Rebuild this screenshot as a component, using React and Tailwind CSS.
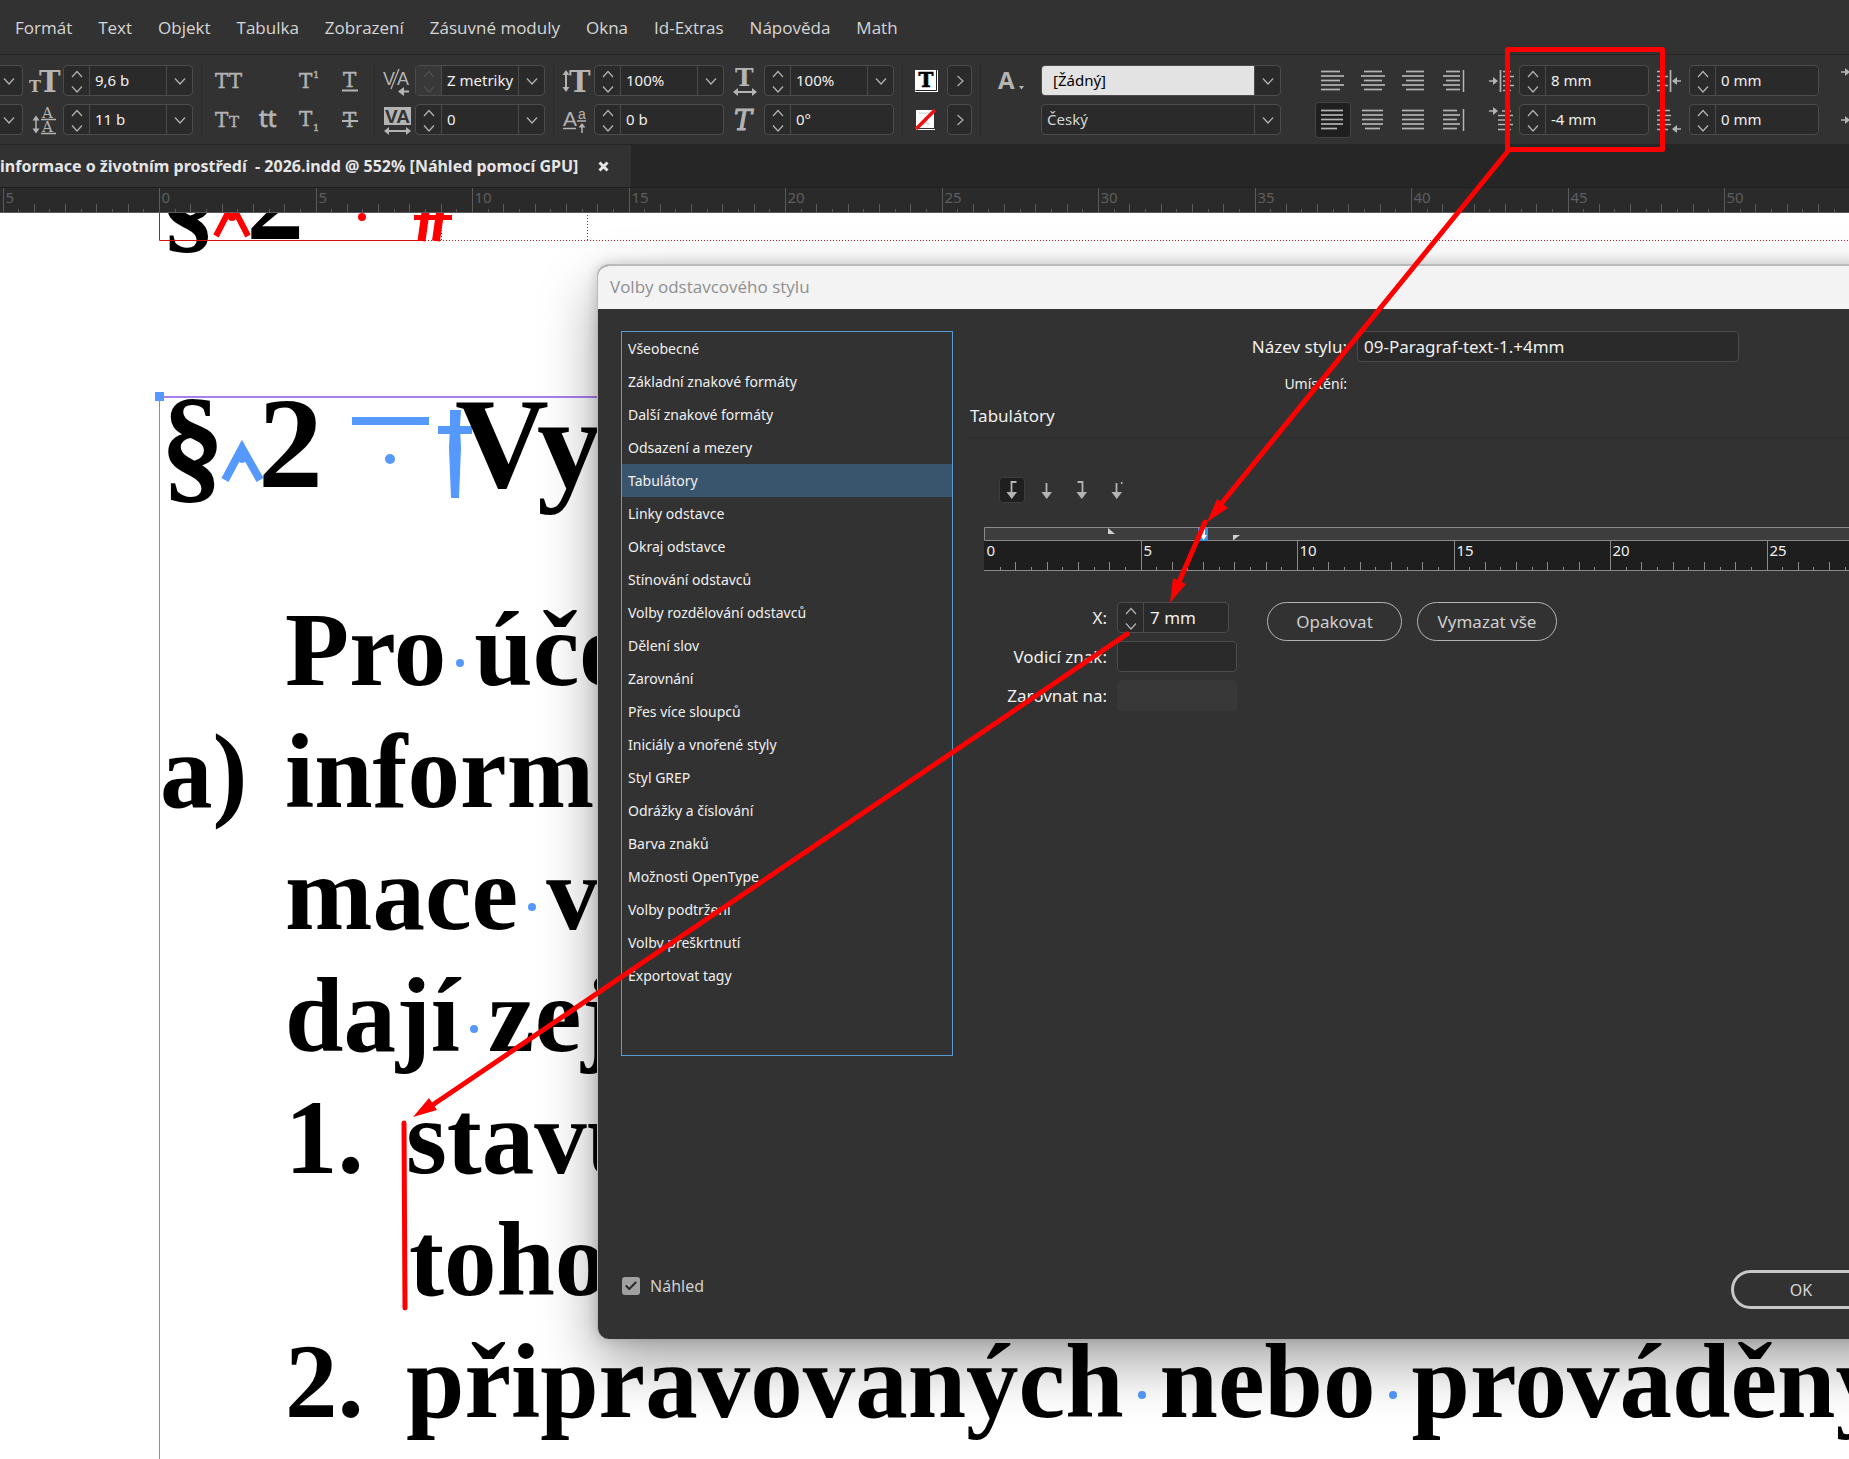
import React, { useState } from 'react';
import { Check } from 'lucide-react';

const MENU = ['Formát', 'Text', 'Objekt', 'Tabulka', 'Zobrazení', 'Zásuvné moduly', 'Okna', 'Id-Extras', 'Nápověda', 'Math'];

const SECTIONS = [
  'Všeobecné',
  'Základní znakové formáty',
  'Další znakové formáty',
  'Odsazení a mezery',
  'Tabulátory',
  'Linky odstavce',
  'Okraj odstavce',
  'Stínování odstavců',
  'Volby rozdělování odstavců',
  'Dělení slov',
  'Zarovnání',
  'Přes více sloupců',
  'Iniciály a vnořené styly',
  'Styl GREP',
  'Odrážky a číslování',
  'Barva znaků',
  'Možnosti OpenType',
  'Volby podtržení',
  'Volby přeškrtnutí',
  'Exportovat tagy'
];

const UNIT = 31.3;

/* ---------- toolbar glyphs ---------- */

const Glyph = ({ children, w = 30 }) => (
  <svg
    width={w}
    height="30"
    viewBox={`0 0 ${w} 30`}
    fill="#b4b4b4"
    stroke="none"
    fontFamily="'DejaVu Serif', serif"
    className="overflow-visible"
    aria-hidden="true"
  >
    {children}
  </svg>
);

const FontSizeIcon = () => (
  <Glyph>
    <text x="1" y="26" fontSize="16" fontWeight="bold">T</text>
    <text x="11" y="26" fontSize="29" fontWeight="bold">T</text>
  </Glyph>
);

const LeadingIcon = () => (
  <Glyph>
    <text x="14" y="13" fontSize="15">A</text>
    <path d="M13 14.500h15M13 28.500h15M8 14v11" stroke="#b4b4b4" strokeWidth="1.500" />
    <path d="M4.500 15.500 8 10.500l3.500 5zM4.500 23.500 8 28.500l3.500-5z" />
    <text x="14" y="27" fontSize="15">A</text>
  </Glyph>
);

const KerningIcon = () => (
  <Glyph>
    <text x="3" y="19" fontSize="18" fontFamily="'Liberation Sans', sans-serif">V</text>
    <text x="17" y="19" fontSize="18" fontFamily="'Liberation Sans', sans-serif">A</text>
    <path d="M11 23 19 3" stroke="#b4b4b4" strokeWidth="1.300" />
    <path d="M22 25.500h7" stroke="#b4b4b4" strokeWidth="2" />
    <path d="M18 25.500l6-4.500v9z" />
  </Glyph>
);

const TrackingIcon = () => (
  <Glyph>
    <path d="M4 2h27v18H4z" />
    <text x="5" y="18" fontSize="19" fontWeight="bold" fill="#323232" fontFamily="'Liberation Sans', sans-serif">VA</text>
    <path d="M7 26h21" stroke="#b4b4b4" strokeWidth="2" />
    <path d="M4 26l5-4v8zM31 26l-5-4v8z" />
  </Glyph>
);

const VScaleIcon = () => (
  <Glyph>
    <path d="M7 8v14" stroke="#b4b4b4" strokeWidth="2" />
    <path d="M3.500 9 7 4l3.500 5zM3.500 21 7 26l3.500-5z" />
    <text x="10" y="26" fontSize="29" fontWeight="bold">T</text>
  </Glyph>
);

const BaselineIcon = () => (
  <Glyph>
    <text x="4" y="21" fontSize="21" fontFamily="'Liberation Sans', sans-serif">A</text>
    <path d="M4 23.500h13" stroke="#b4b4b4" strokeWidth="1.500" />
    <text x="19" y="14" fontSize="14" fontFamily="'Liberation Sans', sans-serif">a</text>
    <path d="M18 16h9M23 20v8" stroke="#b4b4b4" strokeWidth="1.500" />
    <path d="M19.500 22.500 23 18l3.500 4.500z" />
  </Glyph>
);

const HScaleIcon = () => (
  <Glyph>
    <text x="6" y="20" fontSize="25" fontWeight="bold">T</text>
    <path d="M7 26h18" stroke="#b4b4b4" strokeWidth="2" />
    <path d="M4 26l5-4v8zM28 26l-5-4v8z" />
  </Glyph>
);

const SkewIcon = () => (
  <Glyph>
    <text x="5" y="25" fontSize="27" fontStyle="italic" stroke="#b4b4b4" strokeWidth="1">T</text>
  </Glyph>
);

const CapsIcon = () => (
  <Glyph>
    <text x="0" y="22" fontSize="20" stroke="#b4b4b4" strokeWidth=".4">TT</text>
  </Glyph>
);

const SmallCapsIcon = () => (
  <Glyph>
    <text x="0" y="22" fontSize="20" stroke="#b4b4b4" strokeWidth=".4">T</text>
    <text x="14" y="22" fontSize="15" stroke="#b4b4b4" strokeWidth=".4">T</text>
  </Glyph>
);

const LigatureIcon = () => (
  <Glyph>
    <text x="4" y="22" fontSize="24" fontFamily="'Noto Sans', sans-serif" stroke="#b4b4b4" strokeWidth=".8">tt</text>
  </Glyph>
);

const SuperIcon = () => (
  <Glyph>
    <text x="4" y="22" fontSize="20" stroke="#b4b4b4" strokeWidth=".4">T</text>
    <text x="18" y="12" fontSize="10" stroke="#b4b4b4" strokeWidth=".4">1</text>
  </Glyph>
);

const SubIcon = () => (
  <Glyph>
    <text x="4" y="21" fontSize="20" stroke="#b4b4b4" strokeWidth=".4">T</text>
    <text x="18" y="26" fontSize="10" stroke="#b4b4b4" strokeWidth=".4">1</text>
  </Glyph>
);

const UnderlineIcon = () => (
  <Glyph>
    <text x="8" y="21" fontSize="20" stroke="#b4b4b4" strokeWidth=".4">T</text>
    <path d="M7 24.500h16" stroke="#b4b4b4" strokeWidth="2" />
  </Glyph>
);

const StrikeIcon = () => (
  <Glyph>
    <text x="8" y="22" fontSize="20" stroke="#b4b4b4" strokeWidth=".4">T</text>
    <path d="M7 16h16" stroke="#b4b4b4" strokeWidth="2" />
  </Glyph>
);

const FillIcon = () => (
  <svg width="24" height="24" viewBox="0 0 24 24" fontFamily="'DejaVu Serif', serif" aria-hidden="true">
    <path d="M0 1h23v22H0z" fill="#fff" />
    <path d="M.5 21.500h21V1" fill="none" stroke="#222" />
    <text x="11" y="18" fontSize="20" fontWeight="bold" textAnchor="middle" stroke="#000" strokeWidth=".6">T</text>
  </svg>
);

const StrokeIcon = () => (
  <svg width="24" height="24" viewBox="0 0 24 24" aria-hidden="true">
    <path d="M1 2h18v18H1z" fill="#fff" />
    <path d="M4 5h12v3h-4v8h3M8 16h2V9" fill="none" stroke="#ccc" />
    <path d="M1 21.500h19" stroke="#fff" />
    <path d="M1 21 20 2" stroke="#ee1111" strokeWidth="3.500" />
  </svg>
);

// each pair is the start and the end of one text row
const ALIGNMENTS = [
  { label: 'Zarovnat vlevo', rows: [[3, 22], [3, 26], [3, 22], [3, 26], [3, 22]] },
  { label: 'Zarovnat na střed', rows: [[6, 24], [3, 27], [6, 24], [3, 27], [6, 24]] },
  { label: 'Zarovnat vpravo', rows: [[8, 26], [4, 26], [8, 26], [4, 26], [8, 26]] },
  { label: 'Zarovnat ke hřbetu', rows: [[8, 22], [5, 22], [8, 22], [5, 22], [8, 22]], bar: true },
  { label: 'Do bloku vlevo', rows: [[3, 25], [3, 25], [3, 25], [3, 25], [3, 19]] },
  { label: 'Do bloku na střed', rows: [[4, 25], [4, 25], [4, 25], [4, 25], [7, 22]] },
  { label: 'Do bloku', rows: [[4, 26], [4, 26], [4, 26], [4, 26], [4, 26]] },
  { label: 'Od hřbetu', rows: [[5, 19], [5, 22], [5, 19], [5, 22], [5, 19]], bar: true }
];

const Rows = ({ rows, bar }) => (
  <Glyph>
    {rows.map(([a, b], i) => (
      <path key={i} d={`M${a} ${5.5 + i * 4.5}H${b}`} stroke="#b4b4b4" strokeWidth="1.700" />
    ))}
    {bar && <path d="M25.500 4v22" stroke="#b4b4b4" strokeWidth="1.500" />}
  </Glyph>
);

const IndentIcon = ({ kind }) => (
  <Glyph>
    <g stroke="#b4b4b4" strokeWidth="1.700">
      {kind === 'left' && <path d="M5 15h6M16.500 4v22M19 5.500h8M19 10.500h11M19 15h8M19 19.500h11M19 24.500h8" />}
      {kind === 'first' && <path d="M5 6h6M18 6h9M14 10.500h15M14 15h13M14 19.500h15M14 24.500h13" />}
      {kind === 'right' && <path d="M3 5.500h8M3 10.500h11M3 15h8M3 19.500h11M3 24.500h8M16.500 4v22M21 15h6" />}
      {kind === 'last' && <path d="M3 5.500h13M3 10.500h14M3 15h13M3 19.500h14M3 24.500h11M21 24h6" />}
    </g>
    {kind === 'left' && <path d="m14 15-5-4v8z" />}
    {kind === 'first' && <path d="m14 6-5-4v8z" />}
    {kind === 'right' && <path d="m18 15 5-4v8z" />}
    {kind === 'last' && <path d="m18 24 5-4v8z" />}
  </Glyph>
);

const CHEVRONS = {
  up: 'M3 11 8 5.500 13 11',
  down: 'M3 5.500 8 11 13 5.500',
  right: 'M5.500 3 11 8 5.500 13'
};

const Chevron = ({ dir = 'down' }) => (
  <svg width="16" height="16" viewBox="0 0 16 16" fill="none" stroke="currentColor" strokeWidth="1.200" aria-hidden="true">
    <path d={CHEVRONS[dir]} />
  </svg>
);

/* ---------- form pieces ---------- */

const Spinner = ({ label, disabled }) => (
  <div className={`flex w-[26px] shrink-0 flex-col items-center justify-center border-r border-[#4b4b4b] ${disabled ? 'bg-[#383838] text-[#505050]' : 'text-[#b4b4b4]'}`}>
    <button type="button" disabled={disabled} aria-label={`${label}: zvýšit`} className="h-[15px]">
      <Chevron dir="up" />
    </button>
    <button type="button" disabled={disabled} aria-label={`${label}: snížit`} className="h-[15px]">
      <Chevron />
    </button>
  </div>
);

const Field = ({ label, value, menu, disabled }) => (
  <div className="flex h-[31px] w-[130px] shrink-0 overflow-hidden rounded border border-[#4b4b4b] bg-[#2a2a2a]">
    <Spinner label={label} disabled={disabled} />
    <input aria-label={label} defaultValue={value} className="min-w-0 flex-1 bg-transparent pl-[5px] text-[15px] text-[#f0f0f0] outline-none" />
    {menu && (
      <button type="button" aria-label={`${label}: nabídka`} className="flex w-[26px] shrink-0 items-center justify-center border-l border-[#4b4b4b] text-[#b4b4b4]">
        <Chevron />
      </button>
    )}
  </div>
);

const Picker = ({ label, value, light }) => (
  <div className="relative flex h-[31px] overflow-hidden rounded border border-[#4b4b4b] bg-[#2a2a2a]">
    <select
      aria-label={label}
      className={`flex-1 appearance-none text-[15px] outline-none ${light ? 'bg-[#e3e3e3] pl-[11px] text-black' : 'pl-[5px] text-[#d6d6d6]'}`}
    >
      <option>{value}</option>
    </select>
    <span className="flex w-[26px] items-center justify-center border-l border-[#4b4b4b] text-[#b4b4b4]">
      <Chevron />
    </span>
  </div>
);

const Pair = ({ className = '', children }) => (
  <div className={`flex shrink-0 flex-col gap-2 ${className}`}>{children}</div>
);

const IconCell = ({ children }) => (
  <span className="flex h-[31px] w-10 items-center justify-center">{children}</span>
);

const Divider = ({ className = '' }) => (
  <span className={`h-[72px] w-px shrink-0 bg-[#2b2b2b] ${className}`} />
);

const Toolbar = () => (
  <div className="flex h-[90px] items-center overflow-hidden border-b border-[#252525] pt-px">
    <Pair>
      {['Písmo', 'Řez písma'].map((label) => (
        <button
          key={label}
          type="button"
          aria-label={label}
          className="flex h-[31px] w-[23px] items-center justify-center rounded-r border border-l-0 border-[#4b4b4b] bg-[#2a2a2a] pr-1 text-[#b4b4b4]"
        >
          <Chevron />
        </button>
      ))}
    </Pair>
    <Pair>
      <IconCell><FontSizeIcon /></IconCell>
      <IconCell><LeadingIcon /></IconCell>
    </Pair>
    <Pair>
      <Field label="Velikost písma" value="9,6 b" menu />
      <Field label="Proklad" value="11 b" menu />
    </Pair>
    <Divider className="mx-2" />
    <div className="grid shrink-0 grid-cols-4 gap-y-2 pr-1">
      {[CapsIcon, null, SuperIcon, UnderlineIcon, SmallCapsIcon, LigatureIcon, SubIcon, StrikeIcon].map((Icon, i) => (
        <IconCell key={i}>{Icon && <Icon />}</IconCell>
      ))}
    </div>
    <Divider />
    <Pair>
      <IconCell><KerningIcon /></IconCell>
      <IconCell><TrackingIcon /></IconCell>
    </Pair>
    <Pair>
      <Field label="Vyrovnání párů" value="Z metriky" menu disabled />
      <Field label="Prostrkání" value="0" menu />
    </Pair>
    <Divider className="ml-2" />
    <Pair>
      <IconCell><VScaleIcon /></IconCell>
      <IconCell><BaselineIcon /></IconCell>
    </Pair>
    <Pair>
      <Field label="Svislé měřítko" value="100%" menu />
      <Field label="Posun účaří" value="0 b" />
    </Pair>
    <Pair>
      <IconCell><HScaleIcon /></IconCell>
      <IconCell><SkewIcon /></IconCell>
    </Pair>
    <Pair>
      <Field label="Vodorovné měřítko" value="100%" menu />
      <Field label="Sklon" value="0°" />
    </Pair>
    <Divider className="mr-3 ml-2" />
    <Pair>
      {[['Výplň', FillIcon], ['Tah', StrokeIcon]].map(([label, Icon]) => (
        <div key={label} className="flex h-[31px] items-center">
          <Icon />
          <button
            type="button"
            aria-label={label}
            className="ml-2 flex h-[31px] w-[25px] items-center justify-center rounded border border-[#4b4b4b] bg-[#2a2a2a] text-[#b4b4b4]"
          >
            <Chevron dir="right" />
          </button>
        </div>
      ))}
    </Pair>
    <Divider className="ml-2" />
    <Pair className="w-15 items-center self-start pt-[10px]">
      <Glyph>
        <text x="2" y="23" fontSize="24" fontWeight="bold" fontFamily="'Open Sans', sans-serif">A</text>
        <path d="M23 20h5l-2.500 3.500z" />
      </Glyph>
    </Pair>
    <Pair className="w-60">
      <Picker label="Znakový styl" value="[Žádný]" light />
      <Picker label="Jazyk" value="Český" />
    </Pair>
    <div className="ml-8 grid shrink-0 grid-cols-4 gap-y-2">
      {ALIGNMENTS.map(({ label, rows, bar }, i) => (
        <span key={label} className="flex h-[31px] w-10 items-center justify-center">
          <button
            type="button"
            aria-label={label}
            className={`flex shrink-0 items-center justify-center rounded border px-0.5 py-0.5 ${i === 4 ? 'border-[#444] bg-[#1f1f1f]' : 'border-transparent'}`}
          >
            <Rows rows={rows} bar={bar} />
          </button>
        </span>
      ))}
    </div>
    <Pair className="ml-1.5">
      <IconCell><IndentIcon kind="left" /></IconCell>
      <IconCell><IndentIcon kind="first" /></IconCell>
    </Pair>
    <Pair>
      <Field label="Levé odsazení" value="8 mm" />
      <Field label="Odsazení prvního řádku" value="-4 mm" />
    </Pair>
    <Pair>
      <IconCell><IndentIcon kind="right" /></IconCell>
      <IconCell><IndentIcon kind="last" /></IconCell>
    </Pair>
    <Pair>
      <Field label="Pravé odsazení" value="0 mm" />
      <Field label="Odsazení posledního řádku" value="0 mm" />
    </Pair>
    <Pair className="ml-3">
      <IconCell><IndentIcon kind="first" /></IconCell>
      <IconCell><IndentIcon kind="left" /></IconCell>
    </Pair>
  </div>
);

/* ---------- rulers ---------- */

const Ruler = ({ from, to, origin, height, labelY, tick, text, size }) => {
  const marks = [];
  for (let half = from * 2; half <= to * 2; half++) {
    marks.push(half);
  }
  return (
    <svg width="100%" height={height} className="block" fontSize={size} aria-hidden="true">
      {marks.map((half) => {
        const x = Math.round(origin + (half * UNIT) / 2) + 0.5;
        const major = half % 10 === 0;
        const len = major ? height : half % 2 === 0 ? 8 : 3;
        return (
          <g key={half}>
            {!(major && x < 1) && <path d={`M${x} ${height - len}V${height}`} stroke={tick} />}
            {major && <text x={x + 2} y={labelY} fill={text}>{Math.abs(half / 2)}</text>}
          </g>
        );
      })}
    </svg>
  );
};

/* ---------- document ---------- */

// a word space with its blue hidden-character dot above the baseline
const Space = ({ width = 28 }) => (
  <svg width={width} height="26" className="inline-block align-baseline" aria-hidden="true">
    <circle cx={width / 2} cy="4" r="4" fill="#5599ff" />
  </svg>
);

const Line = ({ marker, className = 'pl-[285px]', markerClass = '', children }) => (
  <p className={`flex items-baseline whitespace-nowrap ${className}`}>
    {marker && <span className={`shrink-0 ${markerClass}`}>{marker}</span>}
    <span>{children}</span>
  </p>
);

const Page = () => (
  <main className="relative min-h-0 flex-1 overflow-hidden bg-white font-['Liberation_Serif',serif] font-bold text-black">
    <p className="-mt-[72px] flex h-[120px] pl-[160px] text-[115px] leading-[120px]">
      <span>§</span>
      <span className="w-[29px]" />
      <span>2</span>
    </p>
    {/* frame edges and hidden characters */}
    <svg className="pointer-events-none absolute inset-0 h-full w-full" aria-hidden="true">
      <path d="M159.500 0V27.500H425" fill="none" stroke="#d01010" />
      <path d="M425 27.500H3000M441.500 2V27M587.500 2V27" fill="none" stroke="#b02020" strokeDasharray="1 2" />
      <path d="M216 23 232-8 248 23" fill="none" stroke="#ff0000" strokeWidth="6" />
      <circle cx="232" cy="4" r="4" fill="#ff0000" />
      <circle cx="362" cy="4" r="4" fill="#ff0000" />
      <path d="M414 4.500h38" stroke="#ff0000" strokeWidth="5" />
      <path d="M421.500 28 426-4M436 28 440.500-4" stroke="#ff0000" strokeWidth="8" />
      <path d="M159.500 184V3000" stroke="#5b9bd5" />
      <path d="M160 184H3000" stroke="#a97ff0" strokeWidth="2" />
      <path d="M155 179h9v9h-9z" fill="#5599ff" />
    </svg>
    <p className="mt-[112px] flex h-[140px] pl-[160px] text-[130px] leading-[140px]">
      <span>§</span>
      <svg width="33" height="140" className="overflow-visible" aria-hidden="true">
        <path d="M0 107 17 75 35 107" fill="none" stroke="#5599ff" strokeWidth="8" />
        <circle cx="17" cy="85" r="5" fill="#5599ff" />
      </svg>
      <span>2</span>
      <svg width="132" height="140" className="overflow-visible" fill="#5599ff" aria-hidden="true">
        <path d="M29 44h77v8H29z" />
        <circle cx="67" cy="86" r="5" />
        <path d="M115 53h34v8h-34zM127 37h11l-1 16 1 22-2 50h-8l-2-50 1-22z" />
      </svg>
      <span>Vy</span>
    </p>
    <div className="mt-[76px] text-[105px] leading-[122px]">
      <Line>Pro<Space />úče</Line>
      <Line marker="a)" className="pl-[160px]" markerClass="w-[125px]">inform</Line>
      <Line>mace<Space />v</Line>
      <Line>dají<Space />zej</Line>
      <Line marker="1." markerClass="w-[121px]">stavu</Line>
      <Line className="pl-[409px]">toho</Line>
      <Line marker="2." markerClass="w-[121px]">připravovaných<Space width={36} />nebo<Space width={36} />prováděných</Line>
    </div>
  </main>
);

/* ---------- dialog ---------- */

const TAB_KINDS = [
  { label: 'Levý tabulátor', d: 'M12.500 20V5h5' },
  { label: 'Středový tabulátor', d: 'M12.500 20V6' },
  { label: 'Pravý tabulátor', d: 'M13.500 20V5h-5' },
  { label: 'Desetinný tabulátor', d: 'M12.500 20V6M17 6h1.500' }
];

const StyleDialog = () => {
  const [section, setSection] = useState('Tabulátory');
  const [tabKind, setTabKind] = useState(0);

  return (
    <section
      role="dialog"
      aria-labelledby="dialog-title"
      className="absolute top-[264px] -right-16 left-[597px] flex h-[1075px] flex-col overflow-hidden rounded-xl border-t-2 border-l border-[#b9b9b9] bg-[#323232] text-[#f0f0f0] shadow-[0_24px_56px_rgba(0,0,0,0.36),0_0_14px_rgba(0,0,0,0.18)]"
    >
      <h2 id="dialog-title" className="h-[43px] shrink-0 bg-[#f3f3f3] pl-3 font-['Open_Sans',sans-serif] text-[17px] leading-[42px] text-[#8f8f8f]">
        Volby odstavcového stylu
      </h2>

      <div className="flex flex-1 pt-[22px] pl-[23px]">
        <ul className="h-[725px] w-[332px] shrink-0 border border-[#5b9bd5]">
          {SECTIONS.map((name) => (
            <li key={name}>
              <button
                type="button"
                onClick={() => setSection(name)}
                className={`block h-[33px] w-full pl-1.5 text-left text-[14px] ${name === section ? 'bg-[#39556e]' : ''}`}
              >
                {name}
              </button>
            </li>
          ))}
        </ul>

        <div className="ml-4 min-w-0 flex-1">
          <div className="grid grid-cols-[378px_382px] items-center gap-x-[10px]">
            <label htmlFor="style-name" className="text-right text-[17px] leading-6">Název stylu:</label>
            <input
              id="style-name"
              defaultValue="09-Paragraf-text-1.+4mm"
              className="h-[31px] rounded border border-[#4b4b4b] bg-[#2a2a2a] pl-1.5 text-[17px] outline-none"
            />
            <span className="mt-2.5 text-right text-[14px] leading-6">Umístění:</span>
          </div>

          <h3 className="mt-2 h-[34px] border-b border-[#2c2c2c] pl-px text-[17px] leading-6">{section}</h3>

          <div className="mt-[39px] flex gap-[9px] pl-[30px]">
            {TAB_KINDS.map(({ label, d }, i) => (
              <button
                key={label}
                type="button"
                aria-label={label}
                onClick={() => setTabKind(i)}
                className={`flex size-[26px] items-center justify-center rounded border ${i === tabKind ? 'border-[#3d3d3d] bg-[#1f1f1f]' : 'border-transparent'}`}
              >
                <svg width="26" height="26" viewBox="0 0 26 26" className="shrink-0" aria-hidden="true">
                  <path d={d} fill="none" stroke="#b4b4b4" strokeWidth="1.800" />
                  <path d="M7.500 15h10.500l-5.250 7z" fill="#b4b4b4" />
                </svg>
              </button>
            ))}
          </div>

          <div className="mt-6 ml-[15px]">
            <svg width="100%" height="14" className="block" aria-hidden="true">
              <path d="M.5 .5H3000V13.500H.5z" fill="#3d3d3d" stroke="#8a8a8a" />
              <path d="M124 7V1l7 6zM249 8h7l-7 5.500z" fill="#d0d0d0" />
              <path d="M214 1h10v13h-10z" fill="#3d8ee6" />
              <path d="M218 2h3v6h2l-3.500 5L216 8h2z" fill="#fff" />
            </svg>
            <div className="border-b border-[#8a8a8a] bg-[#1e1e1e]">
              <Ruler from={0} to={30} origin={0} height={29} labelY={15} tick="#8a8a8a" text="#f0f0f0" size={15} />
            </div>
          </div>

          <div className="mt-[31px] flex items-start pl-[38px]">
            <div className="grid grid-cols-[100px_120px] items-center gap-x-[10px] gap-y-2 text-[17px]">
              <label htmlFor="tab-x" className="text-right">X:</label>
              <div className="flex h-[31px] w-28 overflow-hidden rounded border border-[#4b4b4b] bg-[#2a2a2a]">
                <Spinner label="X" />
                <input id="tab-x" defaultValue="7 mm" className="min-w-0 flex-1 bg-transparent pl-1.5 outline-none" />
              </div>
              <label htmlFor="leader" className="text-right whitespace-nowrap">Vodicí znak:</label>
              <input id="leader" className="h-[31px] w-full rounded border border-[#4b4b4b] bg-[#2a2a2a] px-1.5 outline-none" />
              <label htmlFor="align-on" className="text-right whitespace-nowrap">Zarovnat na:</label>
              <input id="align-on" disabled className="h-[31px] w-full rounded bg-[#383838] px-1.5" />
            </div>
            <button type="button" className="ml-[30px] h-[39px] w-[135px] rounded-full border border-[#b4b4b4] text-[17px] text-[#cfcfcf]">
              Opakovat
            </button>
            <button type="button" className="ml-[15px] h-[39px] w-[140px] rounded-full border border-[#b4b4b4] text-[17px] text-[#cfcfcf]">
              Vymazat vše
            </button>
          </div>
        </div>
      </div>

      <div className="flex items-start justify-between pr-[42px] pb-[30px] pl-6">
        <label className="flex items-center gap-[10px] pt-1 text-[16px] text-[#d0d0d0]">
          <span className="relative flex size-[18px]">
            <input type="checkbox" defaultChecked className="peer size-[18px] appearance-none rounded-[3px] bg-[#a0a0a0]" />
            <Check className="pointer-events-none absolute inset-0.5 hidden size-3.5 text-[#2a2a2a] peer-checked:block" strokeWidth={3.5} />
          </span>
          Náhled
        </label>
        <button type="button" className="h-[39px] w-[140px] rounded-full border-3 border-[#c8c8c8] text-[16px] text-[#d6d6d6]">
          OK
        </button>
      </div>
    </section>
  );
};

/* Red markup that ties the indent fields to the tab position and the text */
const Annotations = () => (
  <svg className="pointer-events-none absolute inset-0 h-full w-full" fill="none" stroke="#ff0000" strokeWidth="5" strokeLinecap="round" strokeLinejoin="round" aria-hidden="true">
    <path d="M1507.500 49.500h155v100h-155z" />
    <path d="M1508 151 1221 504M1205 522 1179 582M1127 634 434 1104M404 1123 405 1308" />
    <path d="M1207 522 1217 499 1228 508zM1170 603 1173 578 1186 584zM413 1117 429 1098 437 1110z" fill="#ff0000" stroke="none" />
  </svg>
);

const App = () => (
  <div className="relative flex h-screen flex-col overflow-hidden bg-[#323232] font-['Noto_Sans',sans-serif]">
    <nav className="flex h-[55px] shrink-0 items-center gap-[26px] border-b border-[#252525] pt-px pl-[15px] font-['Open_Sans',sans-serif] text-[17px] text-[#d6d6d6]">
      {MENU.map((item) => (
        <button key={item} type="button" className="whitespace-nowrap">{item}</button>
      ))}
    </nav>
    <Toolbar />
    <div className="flex h-[43px] shrink-0 border-b border-[#1f1f1f] bg-[#262626]">
      <div className="flex items-center gap-5 bg-[#323232] pr-[22px] text-[16px] font-bold whitespace-pre text-[#e6e6e6]">
        <span>informace o životním prostředí  - 2026.indd @ 552% [Náhled pomocí GPU]</span>
        <button type="button" aria-label="Zavřít">
          <svg width="11" height="11" viewBox="0 0 11 11" aria-hidden="true">
            <path d="M1.500 1.500l8 8M9.500 1.500l-8 8" stroke="#e6e6e6" strokeWidth="3" />
          </svg>
        </button>
      </div>
    </div>
    <div className="shrink-0 border-b border-[#5a5a5a] bg-[#2a2a2a]">
      <Ruler from={-5} to={60} origin={159} height={24} labelY={15} tick="#5a5a5a" text="#5e5e5e" size={15} />
    </div>
    <Page />
    <StyleDialog />
    <Annotations />
  </div>
);

export default App;
